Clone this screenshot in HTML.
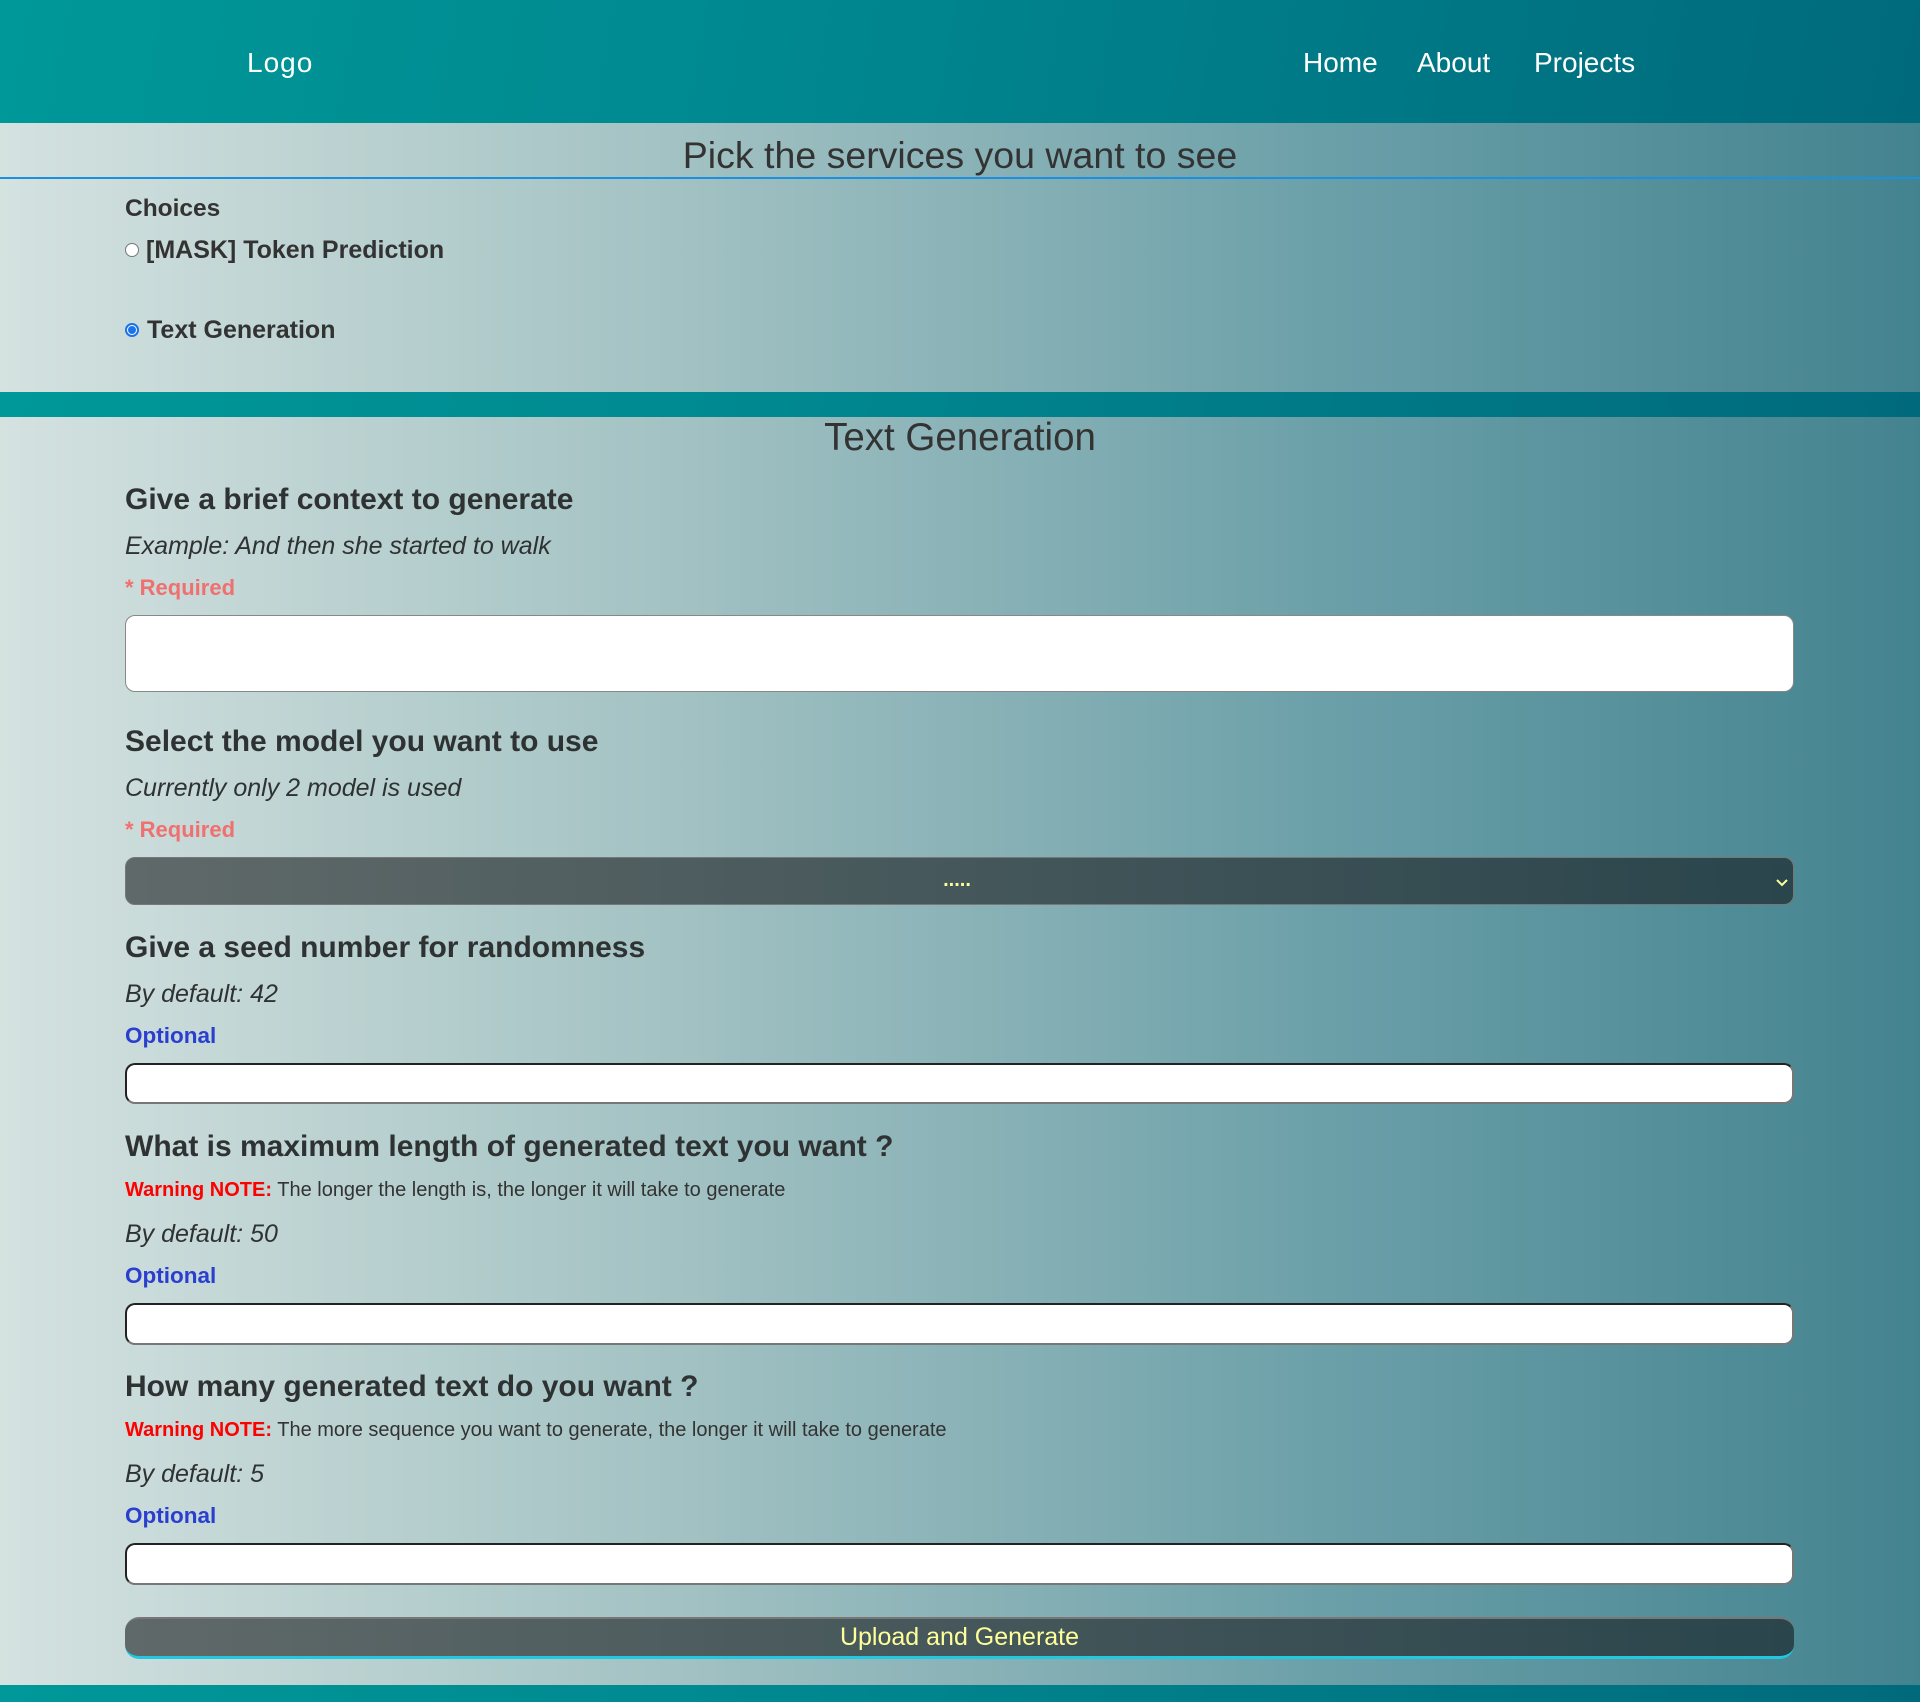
<!DOCTYPE html>
<html><head><meta charset="utf-8"><style>
*{margin:0;padding:0;box-sizing:border-box}
body{width:1920px;height:1702px;position:relative;overflow:hidden;font-family:"Liberation Sans",sans-serif;color:#333;background:linear-gradient(90deg,#d4e2e0 0%,#a3c2c3 35%,#6a9fa8 70%,#43838f 100%)}
.band{position:absolute;left:0;width:1920px;background:linear-gradient(100deg,#009898 0%,#008890 40%,#006a7c 100%)}
.t{position:absolute;white-space:nowrap}
.nav{color:#fff;font-size:28px;line-height:34px;top:46px}
.h{font-weight:bold;font-size:30px;line-height:36px;left:125px;color:#2f3232}
.i{font-style:italic;font-size:25px;line-height:30px;left:125px;color:#2f3232}
.req{font-weight:bold;font-size:22px;line-height:28px;left:125px;color:#f07070}
.opt{font-weight:bold;font-size:22.5px;line-height:28px;left:125px;color:#2a3fd0}
.w{font-size:20px;line-height:24px;left:125px;color:#333}
.w b{color:#f00}
.inp{position:absolute;left:125px;width:1669px;background:#fff;border:2px solid #222;border-bottom-color:#777;border-right-color:#777;border-radius:10px}
</style></head><body>
<div class="band" style="top:0;height:123px"></div>
<div class="t nav" style="left:247px;letter-spacing:1px">Logo</div>
<div class="t nav" style="left:1303px">Home</div>
<div class="t nav" style="left:1417px">About</div>
<div class="t nav" style="left:1534px">Projects</div>
<div class="t" style="left:0;width:1920px;text-align:center;top:133px;font-size:37.5px;line-height:44px;color:#333">Pick the services you want to see</div>
<div style="position:absolute;left:0;top:177px;width:1920px;height:2px;background:#1b8fe0"></div>
<div class="t" style="left:125px;top:194px;font-weight:bold;font-size:24.5px;line-height:30px">Choices</div>
<div style="position:absolute;left:125px;top:243px;width:14px;height:14px;border-radius:50%;background:#fff;border:1px solid #777"></div>
<div class="t" style="left:146px;top:235px;font-weight:bold;font-size:25px;line-height:30px">[MASK] Token Prediction</div>
<div style="position:absolute;left:125px;top:323px;width:14px;height:14px;border-radius:50%;background:#fff;border:2px solid #1a73e8"><div style="margin:1px;width:8px;height:8px;border-radius:50%;background:#1a73e8"></div></div>
<div class="t" style="left:147px;top:315px;font-weight:bold;font-size:25px;line-height:30px">Text Generation</div>
<div class="band" style="top:392px;height:25px"></div>
<div class="t" style="left:0;width:1920px;text-align:center;top:415px;font-size:38.5px;line-height:46px;color:#333">Text Generation</div>

<div class="t h" style="top:482px">Give a brief context to generate</div>
<div class="t i" style="top:531px">Example: And then she started to walk</div>
<div class="t req" style="top:574px">* Required</div>
<div class="inp" style="top:615px;height:77px;border:1px solid #888"></div>

<div class="t h" style="top:724px">Select the model you want to use</div>
<div class="t i" style="top:773px">Currently only 2 model is used</div>
<div class="t req" style="top:816px">* Required</div>
<div style="position:absolute;left:125px;top:857px;width:1669px;height:48px;border-radius:10px;border:1px solid #777;background:linear-gradient(90deg,#606969,#2a454c)"></div>
<div class="t" style="left:0;width:1914px;text-align:center;top:868px;font-size:20px;line-height:24px;color:#ffff99;font-weight:bold">.....</div>
<svg style="position:absolute;left:1776px;top:877px" width="12" height="10"><path d="M1 3 L6 8 L11 3" stroke="#ffff99" stroke-width="2" fill="none"/></svg>

<div class="t h" style="top:930px">Give a seed number for randomness</div>
<div class="t i" style="top:979px">By default: 42</div>
<div class="t opt" style="top:1022px">Optional</div>
<div class="inp" style="top:1063px;height:41px"></div>

<div class="t h" style="top:1129px">What is maximum length of generated text you want ?</div>
<div class="t w" style="top:1178px"><b>Warning NOTE:</b> The longer the length is, the longer it will take to generate</div>
<div class="t i" style="top:1219px">By default: 50</div>
<div class="t opt" style="top:1262px">Optional</div>
<div class="inp" style="top:1303px;height:42px"></div>

<div class="t h" style="top:1369px">How many generated text do you want ?</div>
<div class="t w" style="top:1418px"><b>Warning NOTE:</b> The more sequence you want to generate, the longer it will take to generate</div>
<div class="t i" style="top:1459px">By default: 5</div>
<div class="t opt" style="top:1502px">Optional</div>
<div class="inp" style="top:1543px;height:42px"></div>

<div style="position:absolute;left:125px;top:1617px;width:1669px;height:42px;border-radius:14px;border-top:2px solid #777;border-bottom:3px solid #22c8e0;background:linear-gradient(90deg,#606969,#2a454c);color:#ffff99;font-size:25px;line-height:37px;text-align:center">Upload and Generate</div>
<div class="band" style="top:1685px;height:17px"></div>
</body></html>
